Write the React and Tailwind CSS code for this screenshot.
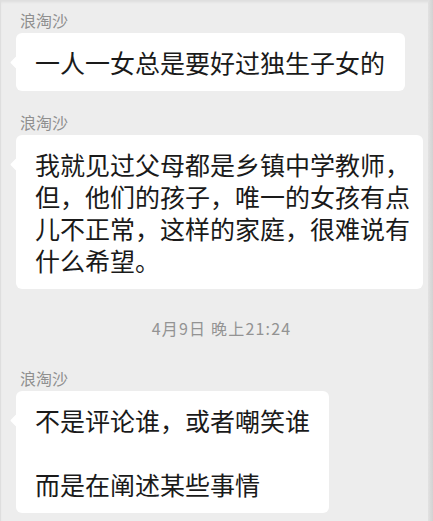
import React from "react";

const FONT = { fontFamily: '"Noto Sans CJK SC", "Noto Sans", sans-serif' };

function Name() {
  return (
    <div className="text-[16px] leading-[20px] text-[#8f8f8f] pl-[4px]">浪淘沙</div>
  );
}

function Bubble({ children, className = "" }) {
  return (
    <div
      className={
        "relative bg-white rounded-[6px] pl-[19px] py-[13px] text-[25px] leading-[32px] text-[#1a1a1a] whitespace-nowrap " +
        className
      }
    >
      <div className="absolute left-[-4px] top-[25px] w-[9px] h-[9px] rotate-45 bg-white rounded-[1px]" />
      <div className="relative">{children}</div>
    </div>
  );
}

export default function App() {
  return (
    <div
      style={FONT}
      className="w-[433px] h-[521px] overflow-hidden flex bg-[#ededed] shadow-[inset_0_2px_3px_rgba(0,0,0,0.07)]"
    >
      <div className="w-[1px] bg-[#dedede]" />
      <div className="flex-1 flex flex-col items-start pl-[15px] pt-[10px]">
        <Name />
        <Bubble className="mt-[3px] pr-[20px]">一人一女总是要好过独生子女的</Bubble>

        <div className="mt-[21px]">
          <Name />
        </div>
        <Bubble className="mt-[3px] pr-[13px]">
          我就见过父母都是乡镇中学教师，
          <br />
          但，他们的孩子，唯一的女孩有点
          <br />
          儿不正常，这样的家庭，很难说有
          <br />
          什么希望。
        </Bubble>

        <div className="self-stretch flex justify-center mt-[29px] pr-[1px]">
          <div className="text-[16px] leading-[20px] text-[#939393] tracking-[1.2px]">
            4月9日 晚上21:24
          </div>
        </div>

        <div className="mt-[30px]">
          <Name />
        </div>
        <Bubble className="mt-[3px] pr-[19px]">
          不是评论谁，或者嘲笑谁
          <br />
          <br />
          而是在阐述某些事情
        </Bubble>
      </div>
      <div className="w-[5px] bg-gradient-to-r from-[#e2e2e2] to-[#d2d2d2]" />
    </div>
  );
}
